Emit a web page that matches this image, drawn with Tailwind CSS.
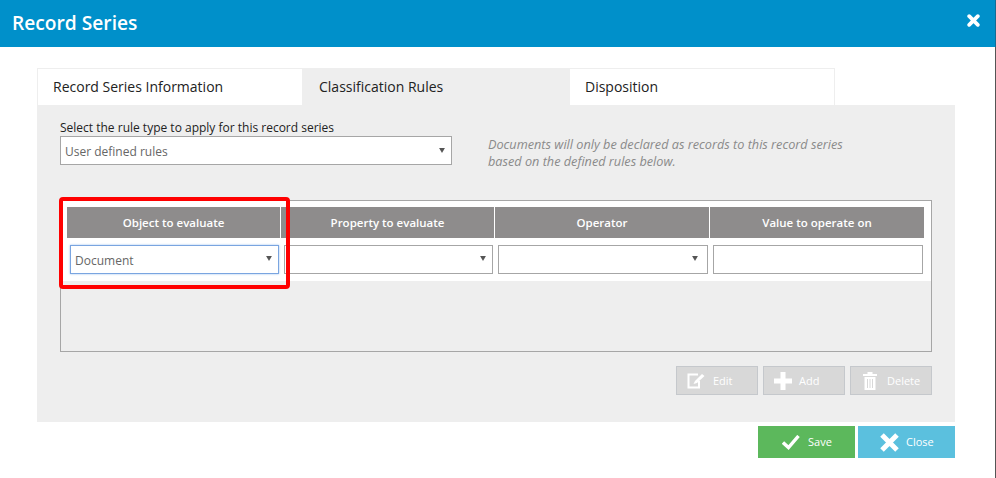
<!DOCTYPE html>
<html lang="en">
<head>
    <meta charset="UTF-8">
    <title>Record Series</title>
    <script src="https://cdn.jsdelivr.net/npm/@tailwindcss/browser@4"></script>
</head>
<body class="bg-white font-['Open_Sans',sans-serif] text-[#222] overflow-hidden">

<div class="w-[996px] h-[478px] border-r border-[#555] flex flex-col">
    <!-- Header -->
    <div class="h-[47px] -mr-px border-r border-[#146c94] bg-[#0090ca] flex items-center justify-between pl-3 pr-[15px] shrink-0">
        <h1 class="text-[19.2px] font-semibold text-white -mt-[1px]">Record Series</h1>
        <svg class="w-[13px] h-[13px] -mt-[7px]" viewBox="0 0 12 12"><path d="M2 2 L10 10 M10 2 L2 10" stroke="#fff" stroke-width="3.4" stroke-linecap="round"/></svg>
    </div>

    <div class="pl-[37px] pt-[21px] w-[955px]">
        <!-- Tabs -->
        <div class="flex h-[37px] w-[798px] text-[14px]">
            <div class="w-[265px] bg-white border-t border-l border-[#eee] pl-[15px] pb-[1px] flex items-center">Record Series Information</div>
            <div class="w-[268px] bg-[#eeeeee] pl-[17px] flex items-center">Classification Rules</div>
            <div class="w-[265px] bg-white border-t border-r border-[#eee] pl-[15px] pb-[1px] flex items-center">Disposition</div>
        </div>

        <!-- Panel -->
        <div class="relative w-[918px] h-[317px] bg-[#eeeeee] px-[23px] pt-[15px]">
            <div class="flex">
                <div class="w-[392px]">
                    <div class="text-[12px] leading-[16px]">Select the rule type to apply for this record series</div>
                    <div class="h-[29px] bg-white border border-[#a6a6a6] flex items-center justify-between pl-[4px] pr-[6px] pt-[2px] text-[12px] text-[#666]">
                        <span>User defined rules</span>
                        <svg class="w-[6px] h-[5px] -mt-[3px]" viewBox="0 0 7 6"><path d="M0 0H7L3.5 6Z" fill="#555"/></svg>
                    </div>
                </div>
                <div class="ml-[36px] mt-[16px] text-[12.7px] leading-[17px] italic text-[#8a8a8a]">Documents will only be declared as records to this record series<br>based on the defined rules below.</div>
            </div>

            <!-- Rules table -->
            <div class="mt-[30px] h-[152px] w-[872px] border border-[#a6a6a6] bg-[#eeeeee]">
                <div class="bg-white pt-[6px] pl-[6px] pr-[7px] h-[80px]">
                    <div class="grid grid-cols-[213px_213px_214px_214px] gap-x-px h-[31px] bg-white text-[11.5px] font-semibold text-white text-center">
                        <div class="bg-[#8e8c8c] flex items-center justify-center">Object to evaluate</div>
                        <div class="bg-[#8e8c8c] flex items-center justify-center">Property to evaluate</div>
                        <div class="bg-[#8e8c8c] flex items-center justify-center">Operator</div>
                        <div class="bg-[#8e8c8c] flex items-center justify-center">Value to operate on</div>
                    </div>
                    <div class="flex mt-[7px] h-[29px] text-[12px] text-[#666]">
                        <div class="ml-[3px] w-[209px] border border-[#7aa5e0] shadow-[0_0_2px_#9cc0ee] flex items-center justify-between pl-[4px] pr-[6px] pt-[2px]">
                            <span>Document</span>
                            <svg class="w-[6px] h-[5px] -mt-[5px]" viewBox="0 0 7 6"><path d="M0 0H7L3.5 6Z" fill="#555"/></svg>
                        </div>
                        <div class="ml-[5px] w-[209px] border border-[#a6a6a6] flex items-center justify-end pr-[6px]">
                            <svg class="w-[6px] h-[5px] -mt-[3px]" viewBox="0 0 7 6"><path d="M0 0H7L3.5 6Z" fill="#555"/></svg>
                        </div>
                        <div class="ml-[5px] w-[210px] border border-[#a6a6a6] flex items-center justify-end pr-[9px]">
                            <svg class="w-[6px] h-[5px] -mt-[3px]" viewBox="0 0 7 6"><path d="M0 0H7L3.5 6Z" fill="#555"/></svg>
                        </div>
                        <div class="ml-[5px] w-[210px] border border-[#a6a6a6]"></div>
                    </div>
                </div>
            </div>

            <!-- Row actions -->
            <div class="flex justify-end gap-[5px] mt-[14px] w-[872px] text-[11px] text-white">
                <div class="w-[82px] h-[29px] bg-[#d8d8d8] border border-[#c5c8cc] flex items-center pl-[10px] gap-[8px]">
                    <svg class="w-[18px] h-[16px]" viewBox="0 0 18 16" fill="none"><path d="M11 1.500H1.500V14.500H12V8" stroke="#fff" stroke-width="2"/><path d="M6.500 11L8 8 15 1 17.500 3 10 10Z" fill="#fff"/></svg>
                    <span class="pt-[1px]">Edit</span>
                </div>
                <div class="w-[82px] h-[29px] bg-[#d8d8d8] border border-[#c5c8cc] flex items-center pl-[10px] gap-[7px]">
                    <svg class="w-[18px] h-[18px]" viewBox="0 0 18 18"><path d="M6.500 0H11.500V6.500H18V11.500H11.500V18H6.500V11.500H0V6.500H6.500Z" fill="#fff"/></svg>
                    <span class="pt-[1px]">Add</span>
                </div>
                <div class="w-[82px] h-[29px] bg-[#d8d8d8] border border-[#c5c8cc] flex items-center pl-[12px] gap-[10px]">
                    <svg class="w-[14px] h-[18px]" viewBox="0 0 14 18" fill="none"><path d="M0 2H14V4H0ZM4.500 0H9.500V2H4.500Z" fill="#fff"/><path d="M1.500 5H12.500V18H1.500Z" fill="#fff"/><path d="M4.500 7V16M7 7V16M9.500 7V16" stroke="#d8d8d8"/></svg>
                    <span class="pt-[1px]">Delete</span>
                </div>
            </div>

            <!-- Highlight drawn over the first column -->
            <div class="absolute left-[22px] top-[92px] w-[231px] h-[92px] border-[4px] border-[#f00] rounded-[4px]"></div>
        </div>

        <!-- Footer buttons -->
        <div class="flex justify-end gap-[3px] mt-[4px] w-[918px] text-[11px] text-white">
            <div class="w-[97px] h-[32px] bg-[#5cb85c] flex items-center pl-[24px] gap-[8px]">
                <svg class="w-[18px] h-[15px]" viewBox="0 0 18 15" fill="none"><path d="M1 7.500L6.500 12.500 16.500 1" stroke="#fff" stroke-width="3.400"/></svg>
                <span>Save</span>
            </div>
            <div class="w-[97px] h-[32px] bg-[#5bc0de] flex items-center pl-[22px] gap-[7px]">
                <svg class="w-[19px] h-[19px]" viewBox="0 0 19 19" fill="none"><path d="M2 2L17 17M17 2L2 17" stroke="#fff" stroke-width="5"/></svg>
                <span>Close</span>
            </div>
        </div>
    </div>
</div>
</body>
</html>
